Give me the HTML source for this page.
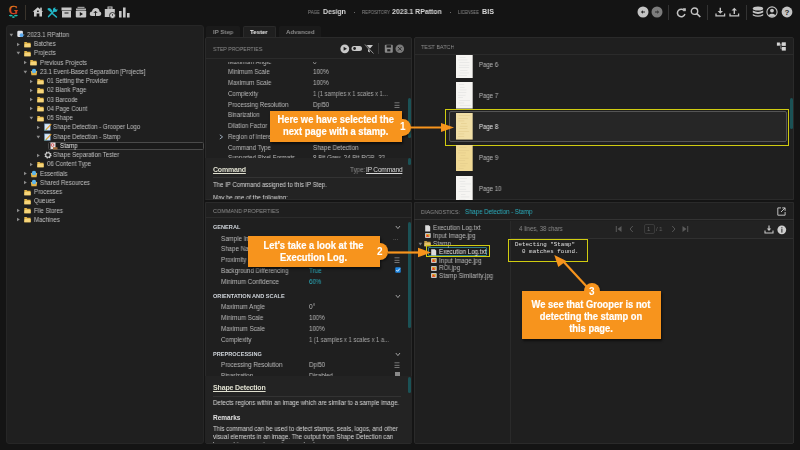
<!DOCTYPE html>
<html><head><meta charset="utf-8"><title>Grooper Design</title>
<style>
html,body{margin:0;padding:0;width:800px;height:450px;overflow:hidden;background:#141414;}
body{position:relative;font-family:"Liberation Sans", sans-serif;-webkit-font-smoothing:antialiased;}
.t{position:absolute;white-space:nowrap;font-family:"Liberation Sans", sans-serif;will-change:transform;transform-origin:0 50%;}
.r{position:absolute;display:block;}
.cw{color:#fff;font-weight:700;text-align:center;}
.sx{display:inline-block;transform:scaleX(0.9);transform-origin:50% 50%;-webkit-text-stroke:0.2px #fff;}
</style></head><body>
<svg class="r" style="left:7px;top:3px;" width="13" height="16" viewBox="0 0 13 16"><defs><linearGradient id="gg" x1="0" y1="0" x2="0" y2="1"><stop offset="0" stop-color="#e8921a"/><stop offset="1" stop-color="#e02a28"/></linearGradient></defs><text x="6.3" y="11" font-family="Liberation Serif" font-size="12.4" text-anchor="middle" fill="url(#gg)" stroke="url(#gg)" stroke-width="0.35">G</text><ellipse cx="3.8" cy="12.6" rx="1.9" ry="0.8" fill="#1fbfb0"/><ellipse cx="8.9" cy="12.6" rx="1.9" ry="0.8" fill="#1fbfb0"/><ellipse cx="6.35" cy="14.1" rx="1.6" ry="0.8" fill="#1fbfb0"/></svg>
<div class="r" style="left:25px;top:5px;width:1px;height:15px;background:#3a342c;"></div>
<svg class="r" style="left:32px;top:6px;" width="12" height="11" viewBox="0 0 12 11"><path d="M5.8 1.2 L11.2 5.8 L10 5.8 L10 10.6 L7.4 10.6 L7.4 7.6 L4.6 7.6 L4.6 10.6 L2 10.6 L2 5.8 L0.6 5.8 Z" fill="#cacaca"/><rect x="8.2" y="1.6" width="1.6" height="3" fill="#cacaca"/><rect x="5" y="4.6" width="1.8" height="1.3" fill="#141414"/></svg>
<svg class="r" style="left:47px;top:6.5px;" width="11" height="11" viewBox="0 0 11 11"><path d="M1.6 9.6 L7.4 3.6" stroke="#22b8c8" stroke-width="1.5" stroke-linecap="round"/><circle cx="8.2" cy="2.8" r="2.3" fill="#22b8c8"/><rect x="8.4" y="0.1" width="2" height="2.2" transform="rotate(45 9.4 1.2)" fill="#141414"/><path d="M4.8 6 L9.4 10" stroke="#22b8c8" stroke-width="1.5" stroke-linecap="round"/><path d="M0.6 1.6 Q2 0.2 3.8 1.8 L5.6 4 L4.2 5.4 L2 3.8 Q0 2.8 0.6 1.6 Z" fill="#22b8c8"/></svg>
<svg class="r" style="left:61px;top:7px;" width="11" height="11" viewBox="0 0 11 11"><rect x="0.5" y="0.5" width="10" height="3" fill="#c6c6c6"/><rect x="1" y="4" width="9" height="6.5" fill="#c6c6c6"/><rect x="3.5" y="5.5" width="4" height="1" fill="#141414"/></svg>
<svg class="r" style="left:75px;top:6px;" width="12" height="12" viewBox="0 0 12 12"><rect x="2.5" y="0.8" width="7" height="1.2" fill="#9a9a9a"/><rect x="1" y="2.5" width="10" height="1.5" fill="#b0b0b0"/><rect x="0.8" y="4.5" width="10.4" height="7" rx="1" fill="#c6c6c6"/><path d="M4.8 6 L8 8 L4.8 10 Z" fill="#141414"/></svg>
<svg class="r" style="left:89px;top:7px;" width="13" height="10" viewBox="0 0 13 10"><path d="M3 9 Q0.5 9 0.8 6.5 Q1 4.5 3 4.6 Q3.5 1 7 1 Q10.3 1 10.5 4.5 Q12.5 4.8 12.3 7 Q12 9 10 9 Z" fill="#c6c6c6"/><path d="M6.5 9 L6.5 4.5 M4.8 6 L6.5 4.2 L8.2 6" stroke="#141414" stroke-width="0.9" fill="none"/></svg>
<svg class="r" style="left:104px;top:6px;" width="12" height="13" viewBox="0 0 12 13"><rect x="4" y="1" width="4" height="2" fill="none" stroke="#c6c6c6" stroke-width="1"/><rect x="0.8" y="3" width="10" height="8" fill="#c6c6c6"/><circle cx="8.5" cy="9.5" r="3" fill="#c6c6c6" stroke="#141414" stroke-width="0.8"/><path d="M8.5 8 L8.5 9.8" stroke="#141414" stroke-width="0.7"/></svg>
<svg class="r" style="left:118px;top:7px;" width="13" height="11" viewBox="0 0 13 11"><rect x="1" y="4" width="2.6" height="6.5" fill="#c6c6c6"/><rect x="5" y="0.5" width="2.6" height="10" fill="#c6c6c6"/><rect x="9" y="6" width="2.6" height="4.5" fill="#c6c6c6"/></svg>
<div class="t" style="left:308px;top:8.70px;font-size:4.6px;line-height:8px;color:#8a8a8a;font-weight:400;transform:scaleX(0.951);">PAGE</div>
<div class="t" style="left:323px;top:7.00px;font-size:7.2px;line-height:10px;color:#d8d8d8;font-weight:700;transform:scaleX(0.951);">Design</div>
<div class="r" style="left:353.5px;top:11.5px;width:1.2px;height:1.2px;background:#888;border-radius:1px"></div>
<div class="t" style="left:362px;top:8.70px;font-size:4.6px;line-height:8px;color:#8a8a8a;font-weight:400;transform:scaleX(0.935);">REPOSITORY</div>
<div class="t" style="left:392px;top:7.00px;font-size:7.2px;line-height:10px;color:#d8d8d8;font-weight:700;transform:scaleX(0.965);">2023.1 RPatton</div>
<div class="r" style="left:450px;top:11.5px;width:1.2px;height:1.2px;background:#888;border-radius:1px"></div>
<div class="t" style="left:458px;top:8.70px;font-size:4.6px;line-height:8px;color:#8a8a8a;font-weight:400;transform:scaleX(0.919);">LICENSEE</div>
<div class="t" style="left:482px;top:7.00px;font-size:7.2px;line-height:10px;color:#d8d8d8;font-weight:700;transform:scaleX(0.980);">BIS</div>
<svg class="r" style="left:637px;top:6px;" width="12" height="12" viewBox="0 0 12 12"><circle cx="6" cy="6" r="5.5" fill="#c4c4c4"/><path d="M3.8 6 L6 4.2 L6 7.8 Z M5.5 5.4 L8 5.4 L8 6.6 L5.5 6.6 Z" fill="#2a2a2a"/></svg>
<svg class="r" style="left:651px;top:6px;" width="12" height="12" viewBox="0 0 12 12"><circle cx="6" cy="6" r="5.5" fill="#7c7c7c"/><path d="M8.2 6 L6 4.2 L6 7.8 Z M4 5.4 L6.5 5.4 L6.5 6.6 L4 6.6 Z" fill="#2a2a2a"/></svg>
<div class="r" style="left:668px;top:5px;width:1px;height:15px;background:#333;"></div>
<svg class="r" style="left:676px;top:7px;" width="11" height="11" viewBox="0 0 11 11"><path d="M8.6 4.2 A3.8 3.8 0 1 0 8.9 7" stroke="#c4c4c4" stroke-width="1.5" fill="none"/><path d="M6.6 1.2 L9.8 1.2 L9.8 4.4 Z" fill="#c4c4c4"/></svg>
<svg class="r" style="left:690px;top:7px;" width="12" height="11" viewBox="0 0 12 11"><circle cx="4.5" cy="4.2" r="3.2" stroke="#c4c4c4" stroke-width="1.4" fill="none"/><path d="M6.8 6.6 L10.3 10" stroke="#c4c4c4" stroke-width="1.6"/></svg>
<div class="r" style="left:707px;top:5px;width:1px;height:15px;background:#333;"></div>
<svg class="r" style="left:715px;top:7px;" width="11" height="10" viewBox="0 0 11 10"><path d="M5.3 0.8 L5.3 6" stroke="#c4c4c4" stroke-width="1.4"/><path d="M2.6 4 L5.3 6.8 L8 4 Z" fill="#c4c4c4"/><path d="M1 6.5 L1 8.8 L9.6 8.8 L9.6 6.5" stroke="#c4c4c4" stroke-width="1.3" fill="none"/></svg>
<svg class="r" style="left:729px;top:7px;" width="11" height="10" viewBox="0 0 11 10"><path d="M5.3 7 L5.3 2" stroke="#c4c4c4" stroke-width="1.4"/><path d="M2.6 3.6 L5.3 0.8 L8 3.6 Z" fill="#c4c4c4"/><path d="M1 6.5 L1 8.8 L9.6 8.8 L9.6 6.5" stroke="#c4c4c4" stroke-width="1.3" fill="none"/></svg>
<div class="r" style="left:746px;top:5px;width:1px;height:15px;background:#333;"></div>
<svg class="r" style="left:752px;top:6px;" width="12" height="12" viewBox="0 0 12 12"><ellipse cx="6" cy="2.6" rx="5.2" ry="2" fill="#c4c4c4"/><path d="M0.8 4.6 Q6 7.5 11.2 4.6 L11.2 6.6 Q6 9.5 0.8 6.6 Z" fill="#c4c4c4"/><path d="M0.8 8 Q6 11 11.2 8 L11.2 9.4 Q6 12.3 0.8 9.4 Z" fill="#c4c4c4"/></svg>
<svg class="r" style="left:766px;top:6px;" width="12" height="12" viewBox="0 0 12 12"><circle cx="6" cy="6" r="5.1" stroke="#c4c4c4" stroke-width="1.1" fill="none"/><circle cx="6" cy="4.6" r="1.9" fill="#c4c4c4"/><path d="M2.4 9.2 Q6 6.5 9.6 9.2 L8.5 10.3 Q6 11.3 3.5 10.3 Z" fill="#c4c4c4"/></svg>
<svg class="r" style="left:781px;top:6px;" width="12" height="12" viewBox="0 0 12 12"><circle cx="6" cy="6" r="5.4" fill="#c4c4c4"/><text x="6" y="9" font-family="Liberation Sans" font-weight="700" font-size="8" text-anchor="middle" fill="#262626">?</text></svg>
<div class="r" style="left:6px;top:25px;width:198px;height:418.8px;background:#1f1f1f;border:1px solid #262626;box-sizing:border-box;border-radius:3px"></div>
<svg class="r" style="left:9.4px;top:32.9px;" width="5" height="4" viewBox="0 0 5 4"><path d="M0.5 0.8 L4.2 0.8 L2.35 3.4 Z" fill="#8c8c8c"/></svg>
<svg class="r" style="left:17.2px;top:30.4px;" width="8" height="8" viewBox="0 0 8 8"><rect x="0.3" y="0.8" width="5.6" height="6.2" rx="1.2" fill="#dfe3ea"/><circle cx="4.6" cy="5.2" r="1.9" fill="#5aaaf0"/><path d="M6.5 4.6 L7.4 4.8" stroke="#ccc" stroke-width="0.6"/></svg>
<div class="t" style="left:27.0px;top:29.90px;font-size:6.6px;line-height:10px;color:#c0c0c0;font-weight:400;transform:scaleX(0.917);">2023.1 RPatton</div>
<svg class="r" style="left:16.0px;top:41.65px;" width="5" height="5" viewBox="0 0 5 5"><path d="M1 0.8 L3.8 2.5 L1 4.2 Z" fill="#8c8c8c"/></svg>
<svg class="r" style="left:23.799999999999997px;top:40.65px;" width="7" height="7" viewBox="0 0 7 7"><path d="M0.3 1 L2.6 1 L3.3 1.8 L6.6 1.8 L6.6 6.2 L0.3 6.2 Z" fill="#e5b84c"/><path d="M0.6 3 L6.6 3 L6.6 6.2 L0.3 6.2 Z" fill="#f6d57a"/></svg>
<div class="t" style="left:33.6px;top:39.15px;font-size:6.6px;line-height:10px;color:#c0c0c0;font-weight:400;transform:scaleX(0.913);">Batches</div>
<svg class="r" style="left:16.0px;top:51.4px;" width="5" height="4" viewBox="0 0 5 4"><path d="M0.5 0.8 L4.2 0.8 L2.35 3.4 Z" fill="#8c8c8c"/></svg>
<svg class="r" style="left:23.799999999999997px;top:49.9px;" width="7" height="7" viewBox="0 0 7 7"><path d="M0.3 1 L2.6 1 L3.3 1.8 L6.6 1.8 L6.6 6.2 L0.3 6.2 Z" fill="#e5b84c"/><path d="M0.6 3 L6.6 3 L6.6 6.2 L0.3 6.2 Z" fill="#f6d57a"/></svg>
<div class="t" style="left:33.6px;top:48.40px;font-size:6.6px;line-height:10px;color:#c0c0c0;font-weight:400;transform:scaleX(0.913);">Projects</div>
<svg class="r" style="left:22.6px;top:60.15px;" width="5" height="5" viewBox="0 0 5 5"><path d="M1 0.8 L3.8 2.5 L1 4.2 Z" fill="#8c8c8c"/></svg>
<svg class="r" style="left:30.4px;top:59.15px;" width="7" height="7" viewBox="0 0 7 7"><path d="M0.3 1 L2.6 1 L3.3 1.8 L6.6 1.8 L6.6 6.2 L0.3 6.2 Z" fill="#e5b84c"/><path d="M0.6 3 L6.6 3 L6.6 6.2 L0.3 6.2 Z" fill="#f6d57a"/></svg>
<div class="t" style="left:40.2px;top:57.65px;font-size:6.6px;line-height:10px;color:#c0c0c0;font-weight:400;transform:scaleX(0.913);">Previous Projects</div>
<svg class="r" style="left:22.6px;top:69.9px;" width="5" height="4" viewBox="0 0 5 4"><path d="M0.5 0.8 L4.2 0.8 L2.35 3.4 Z" fill="#8c8c8c"/></svg>
<svg class="r" style="left:30.4px;top:67.9px;" width="8" height="8" viewBox="0 0 8 8"><path d="M0.8 3 L7.2 3 L6.6 7.2 L1.4 7.2 Z" fill="#e2b348"/><circle cx="4" cy="3" r="2.2" fill="#5db5ea"/></svg>
<div class="t" style="left:40.2px;top:66.90px;font-size:6.6px;line-height:10px;color:#c0c0c0;font-weight:400;transform:scaleX(0.913);">23.1 Event-Based Separation [Projects]</div>
<svg class="r" style="left:29.199999999999996px;top:78.65px;" width="5" height="5" viewBox="0 0 5 5"><path d="M1 0.8 L3.8 2.5 L1 4.2 Z" fill="#8c8c8c"/></svg>
<svg class="r" style="left:37.0px;top:77.65px;" width="7" height="7" viewBox="0 0 7 7"><path d="M0.3 1 L2.6 1 L3.3 1.8 L6.6 1.8 L6.6 6.2 L0.3 6.2 Z" fill="#e5b84c"/><path d="M0.6 3 L6.6 3 L6.6 6.2 L0.3 6.2 Z" fill="#f6d57a"/></svg>
<div class="t" style="left:46.8px;top:76.15px;font-size:6.6px;line-height:10px;color:#c0c0c0;font-weight:400;transform:scaleX(0.912);">01 Setting the Provider</div>
<svg class="r" style="left:29.199999999999996px;top:87.9px;" width="5" height="5" viewBox="0 0 5 5"><path d="M1 0.8 L3.8 2.5 L1 4.2 Z" fill="#8c8c8c"/></svg>
<svg class="r" style="left:37.0px;top:86.9px;" width="7" height="7" viewBox="0 0 7 7"><path d="M0.3 1 L2.6 1 L3.3 1.8 L6.6 1.8 L6.6 6.2 L0.3 6.2 Z" fill="#e5b84c"/><path d="M0.6 3 L6.6 3 L6.6 6.2 L0.3 6.2 Z" fill="#f6d57a"/></svg>
<div class="t" style="left:46.8px;top:85.40px;font-size:6.6px;line-height:10px;color:#c0c0c0;font-weight:400;transform:scaleX(0.915);">02 Blank Page</div>
<svg class="r" style="left:29.199999999999996px;top:97.15px;" width="5" height="5" viewBox="0 0 5 5"><path d="M1 0.8 L3.8 2.5 L1 4.2 Z" fill="#8c8c8c"/></svg>
<svg class="r" style="left:37.0px;top:96.15px;" width="7" height="7" viewBox="0 0 7 7"><path d="M0.3 1 L2.6 1 L3.3 1.8 L6.6 1.8 L6.6 6.2 L0.3 6.2 Z" fill="#e5b84c"/><path d="M0.6 3 L6.6 3 L6.6 6.2 L0.3 6.2 Z" fill="#f6d57a"/></svg>
<div class="t" style="left:46.8px;top:94.65px;font-size:6.6px;line-height:10px;color:#c0c0c0;font-weight:400;transform:scaleX(0.913);">03 Barcode</div>
<svg class="r" style="left:29.199999999999996px;top:106.4px;" width="5" height="5" viewBox="0 0 5 5"><path d="M1 0.8 L3.8 2.5 L1 4.2 Z" fill="#8c8c8c"/></svg>
<svg class="r" style="left:37.0px;top:105.4px;" width="7" height="7" viewBox="0 0 7 7"><path d="M0.3 1 L2.6 1 L3.3 1.8 L6.6 1.8 L6.6 6.2 L0.3 6.2 Z" fill="#e5b84c"/><path d="M0.6 3 L6.6 3 L6.6 6.2 L0.3 6.2 Z" fill="#f6d57a"/></svg>
<div class="t" style="left:46.8px;top:103.90px;font-size:6.6px;line-height:10px;color:#c0c0c0;font-weight:400;transform:scaleX(0.915);">04 Page Count</div>
<svg class="r" style="left:29.199999999999996px;top:116.15px;" width="5" height="4" viewBox="0 0 5 4"><path d="M0.5 0.8 L4.2 0.8 L2.35 3.4 Z" fill="#8c8c8c"/></svg>
<svg class="r" style="left:37.0px;top:114.65px;" width="7" height="7" viewBox="0 0 7 7"><path d="M0.3 1 L2.6 1 L3.3 1.8 L6.6 1.8 L6.6 6.2 L0.3 6.2 Z" fill="#e5b84c"/><path d="M0.6 3 L6.6 3 L6.6 6.2 L0.3 6.2 Z" fill="#f6d57a"/></svg>
<div class="t" style="left:46.8px;top:113.15px;font-size:6.6px;line-height:10px;color:#c0c0c0;font-weight:400;transform:scaleX(0.915);">05 Shape</div>
<svg class="r" style="left:35.8px;top:124.9px;" width="5" height="5" viewBox="0 0 5 5"><path d="M1 0.8 L3.8 2.5 L1 4.2 Z" fill="#8c8c8c"/></svg>
<svg class="r" style="left:43.599999999999994px;top:123.4px;" width="8" height="8" viewBox="0 0 8 8"><rect x="0.6" y="0.9" width="5.6" height="6.4" fill="#d6e6f4" stroke="#7aa6d0" stroke-width="0.5"/><path d="M2 6.6 L7.2 1.2" stroke="#e39a2a" stroke-width="1.1"/><path d="M1.2 7.4 L2.4 6.2" stroke="#5fb04a" stroke-width="1"/></svg>
<div class="t" style="left:53.4px;top:122.40px;font-size:6.6px;line-height:10px;color:#c0c0c0;font-weight:400;transform:scaleX(0.914);">Shape Detection - Grooper Logo</div>
<svg class="r" style="left:35.8px;top:134.65px;" width="5" height="4" viewBox="0 0 5 4"><path d="M0.5 0.8 L4.2 0.8 L2.35 3.4 Z" fill="#8c8c8c"/></svg>
<svg class="r" style="left:43.599999999999994px;top:132.65px;" width="8" height="8" viewBox="0 0 8 8"><rect x="0.6" y="0.9" width="5.6" height="6.4" fill="#d6e6f4" stroke="#7aa6d0" stroke-width="0.5"/><path d="M2 6.6 L7.2 1.2" stroke="#e39a2a" stroke-width="1.1"/><path d="M1.2 7.4 L2.4 6.2" stroke="#5fb04a" stroke-width="1"/></svg>
<div class="t" style="left:53.4px;top:131.65px;font-size:6.6px;line-height:10px;color:#c0c0c0;font-weight:400;transform:scaleX(0.914);">Shape Detection - Stamp</div>
<div class="r" style="left:48px;top:141.6px;width:156px;height:8.6px;background:#1a1a1a;border:1px solid #4a4a4a;border-radius:1.5px;box-sizing:border-box"></div>
<svg class="r" style="left:50.2px;top:141.9px;" width="8" height="8" viewBox="0 0 8 8"><rect x="0.5" y="0.5" width="5" height="6.5" fill="#e8e2e2"/><circle cx="2.5" cy="3" r="1.4" fill="none" stroke="#d04040" stroke-width="0.8"/><rect x="3" y="5.2" width="4.5" height="2.3" fill="#a06a3a"/></svg>
<div class="t" style="left:60.0px;top:140.90px;font-size:6.6px;line-height:10px;color:#ededed;font-weight:400;transform:scaleX(0.915);">Stamp</div>
<svg class="r" style="left:35.8px;top:152.65px;" width="5" height="5" viewBox="0 0 5 5"><path d="M1 0.8 L3.8 2.5 L1 4.2 Z" fill="#8c8c8c"/></svg>
<svg class="r" style="left:43.599999999999994px;top:151.15px;" width="8" height="8" viewBox="0 0 8 8"><circle cx="4" cy="4" r="2.9" fill="none" stroke="#d4d4d4" stroke-width="1.4" stroke-dasharray="1.1 1.18"/><circle cx="4" cy="4" r="2.3" fill="none" stroke="#d4d4d4" stroke-width="1.1"/></svg>
<div class="t" style="left:53.4px;top:150.15px;font-size:6.6px;line-height:10px;color:#c0c0c0;font-weight:400;transform:scaleX(0.913);">Shape Separation Tester</div>
<svg class="r" style="left:29.199999999999996px;top:161.9px;" width="5" height="5" viewBox="0 0 5 5"><path d="M1 0.8 L3.8 2.5 L1 4.2 Z" fill="#8c8c8c"/></svg>
<svg class="r" style="left:37.0px;top:160.9px;" width="7" height="7" viewBox="0 0 7 7"><path d="M0.3 1 L2.6 1 L3.3 1.8 L6.6 1.8 L6.6 6.2 L0.3 6.2 Z" fill="#e5b84c"/><path d="M0.6 3 L6.6 3 L6.6 6.2 L0.3 6.2 Z" fill="#f6d57a"/></svg>
<div class="t" style="left:46.8px;top:159.40px;font-size:6.6px;line-height:10px;color:#c0c0c0;font-weight:400;transform:scaleX(0.914);">06 Content Type</div>
<svg class="r" style="left:22.6px;top:171.15px;" width="5" height="5" viewBox="0 0 5 5"><path d="M1 0.8 L3.8 2.5 L1 4.2 Z" fill="#8c8c8c"/></svg>
<svg class="r" style="left:30.4px;top:169.65px;" width="8" height="8" viewBox="0 0 8 8"><path d="M0.8 3 L7.2 3 L6.6 7.2 L1.4 7.2 Z" fill="#e2b348"/><circle cx="4" cy="3" r="2.2" fill="#5db5ea"/></svg>
<div class="t" style="left:40.2px;top:168.65px;font-size:6.6px;line-height:10px;color:#c0c0c0;font-weight:400;transform:scaleX(0.912);">Essentials</div>
<svg class="r" style="left:22.6px;top:180.4px;" width="5" height="5" viewBox="0 0 5 5"><path d="M1 0.8 L3.8 2.5 L1 4.2 Z" fill="#8c8c8c"/></svg>
<svg class="r" style="left:30.4px;top:178.9px;" width="8" height="8" viewBox="0 0 8 8"><path d="M0.8 3 L7.2 3 L6.6 7.2 L1.4 7.2 Z" fill="#e2b348"/><circle cx="4" cy="3" r="2.2" fill="#5db5ea"/></svg>
<div class="t" style="left:40.2px;top:177.90px;font-size:6.6px;line-height:10px;color:#c0c0c0;font-weight:400;transform:scaleX(0.913);">Shared Resources</div>
<svg class="r" style="left:23.799999999999997px;top:188.65px;" width="7" height="7" viewBox="0 0 7 7"><path d="M0.3 1 L2.6 1 L3.3 1.8 L6.6 1.8 L6.6 6.2 L0.3 6.2 Z" fill="#e5b84c"/><path d="M0.6 3 L6.6 3 L6.6 6.2 L0.3 6.2 Z" fill="#f6d57a"/></svg>
<div class="t" style="left:33.6px;top:187.15px;font-size:6.6px;line-height:10px;color:#c0c0c0;font-weight:400;transform:scaleX(0.912);">Processes</div>
<svg class="r" style="left:23.799999999999997px;top:197.9px;" width="7" height="7" viewBox="0 0 7 7"><path d="M0.3 1 L2.6 1 L3.3 1.8 L6.6 1.8 L6.6 6.2 L0.3 6.2 Z" fill="#e5b84c"/><path d="M0.6 3 L6.6 3 L6.6 6.2 L0.3 6.2 Z" fill="#f6d57a"/></svg>
<div class="t" style="left:33.6px;top:196.40px;font-size:6.6px;line-height:10px;color:#c0c0c0;font-weight:400;transform:scaleX(0.914);">Queues</div>
<svg class="r" style="left:16.0px;top:208.15px;" width="5" height="5" viewBox="0 0 5 5"><path d="M1 0.8 L3.8 2.5 L1 4.2 Z" fill="#8c8c8c"/></svg>
<svg class="r" style="left:23.799999999999997px;top:207.15px;" width="7" height="7" viewBox="0 0 7 7"><path d="M0.3 1 L2.6 1 L3.3 1.8 L6.6 1.8 L6.6 6.2 L0.3 6.2 Z" fill="#e5b84c"/><path d="M0.6 3 L6.6 3 L6.6 6.2 L0.3 6.2 Z" fill="#f6d57a"/></svg>
<div class="t" style="left:33.6px;top:205.65px;font-size:6.6px;line-height:10px;color:#c0c0c0;font-weight:400;transform:scaleX(0.915);">File Stores</div>
<svg class="r" style="left:16.0px;top:217.4px;" width="5" height="5" viewBox="0 0 5 5"><path d="M1 0.8 L3.8 2.5 L1 4.2 Z" fill="#8c8c8c"/></svg>
<svg class="r" style="left:23.799999999999997px;top:216.4px;" width="7" height="7" viewBox="0 0 7 7"><path d="M0.3 1 L2.6 1 L3.3 1.8 L6.6 1.8 L6.6 6.2 L0.3 6.2 Z" fill="#e5b84c"/><path d="M0.6 3 L6.6 3 L6.6 6.2 L0.3 6.2 Z" fill="#f6d57a"/></svg>
<div class="t" style="left:33.6px;top:214.90px;font-size:6.6px;line-height:10px;color:#c0c0c0;font-weight:400;transform:scaleX(0.913);">Machines</div>
<div class="r" style="left:206px;top:25.5px;width:34px;height:12px;background:#1a1a1a;border-radius:2px 2px 0 0"></div>
<div class="t" style="left:212.5px;top:26.90px;font-size:6.2px;line-height:10px;color:#8a8a8a;font-weight:700;transform:scaleX(0.974);">IP Step</div>
<div class="r" style="left:243.2px;top:25.8px;width:32.7px;height:12.5px;background:#1f1f1f;border:1px solid #2a2a2a;border-bottom:none;box-sizing:border-box;border-radius:2px 2px 0 0"></div>
<div class="t" style="left:249.5px;top:26.90px;font-size:6.2px;line-height:10px;color:#e8e8e8;font-weight:700;transform:scaleX(0.972);">Tester</div>
<div class="r" style="left:278.7px;top:25.5px;width:42.7px;height:12px;background:#1a1a1a;border-radius:2px 2px 0 0"></div>
<div class="t" style="left:285.5px;top:26.90px;font-size:6.2px;line-height:10px;color:#8a8a8a;font-weight:700;transform:scaleX(0.971);">Advanced</div>
<div class="r" style="left:205px;top:37px;width:207px;height:162.7px;background:#1f1f1f;border:1px solid #2a2a2a;box-sizing:border-box;border-radius:2px 2px 0 0"></div>
<div class="r" style="left:205px;top:58px;width:207px;height:1px;background:#2b2b2b;"></div>
<div class="t" style="left:213px;top:43.70px;font-size:6.2px;line-height:10px;color:#8e8e8e;font-weight:400;transform:scaleX(0.856);">STEP PROPERTIES</div>
<svg class="r" style="left:340px;top:44px;" width="10" height="10" viewBox="0 0 10 10"><circle cx="4.8" cy="4.8" r="4.4" fill="#c8c8c8"/><path d="M3.6 2.8 L7 4.8 L3.6 6.8 Z" fill="#222"/></svg>
<svg class="r" style="left:351px;top:45px;" width="12" height="7" viewBox="0 0 12 7"><rect x="0.5" y="1" width="10.5" height="5" rx="2.5" fill="#c8c8c8"/><circle cx="3.6" cy="3.5" r="1.4" fill="#222"/></svg>
<svg class="r" style="left:364px;top:44px;" width="10" height="10" viewBox="0 0 10 10"><path d="M0.8 1 L9 1 L5.8 4.8 L5.8 8.5 L4 7.5 L4 4.8 Z" fill="#c8c8c8"/><path d="M1 0.5 L9.5 9.5" stroke="#1f1f1f" stroke-width="1.6"/><path d="M1 0.5 L9.5 9.5" stroke="#c8c8c8" stroke-width="0.7"/></svg>
<div class="r" style="left:378px;top:43px;width:1px;height:11px;background:#3a3a3a;"></div>
<svg class="r" style="left:384px;top:44px;" width="10" height="10" viewBox="0 0 10 10"><rect x="0.8" y="0.8" width="8" height="8" rx="1" fill="#8a8a8a"/><rect x="2.5" y="1.2" width="4.6" height="2.4" fill="#1f1f1f"/><rect x="3.2" y="5.2" width="3.2" height="2.2" fill="#1f1f1f"/></svg>
<svg class="r" style="left:395px;top:44px;" width="10" height="10" viewBox="0 0 10 10"><circle cx="4.8" cy="4.8" r="4.3" fill="#7a7a7a"/><path d="M3 3 L6.6 6.6 M6.6 3 L3 6.6" stroke="#222" stroke-width="0.9"/></svg>
<div class="r" style="left:206px;top:61.5px;width:202px;height:96.5px;overflow:hidden">
<div class="t" style="left:22px;top:-4.90px;font-size:6.6px;line-height:10px;color:#bababa;font-weight:400;transform:scaleX(0.923);">Maximum Angle</div>
<div class="t" style="left:106.7px;top:-4.90px;font-size:6.6px;line-height:10px;color:#bababa;font-weight:400;transform:scaleX(0.933);">0°</div>
<div class="t" style="left:22px;top:5.85px;font-size:6.6px;line-height:10px;color:#bababa;font-weight:400;transform:scaleX(0.923);">Minimum Scale</div>
<div class="t" style="left:106.7px;top:5.85px;font-size:6.6px;line-height:10px;color:#bababa;font-weight:400;transform:scaleX(0.933);">100%</div>
<div class="t" style="left:22px;top:16.60px;font-size:6.6px;line-height:10px;color:#bababa;font-weight:400;transform:scaleX(0.923);">Maximum Scale</div>
<div class="t" style="left:106.7px;top:16.60px;font-size:6.6px;line-height:10px;color:#bababa;font-weight:400;transform:scaleX(0.933);">100%</div>
<div class="t" style="left:22px;top:27.35px;font-size:6.6px;line-height:10px;color:#bababa;font-weight:400;transform:scaleX(0.921);">Complexity</div>
<div class="t" style="left:106.7px;top:27.35px;font-size:6.6px;line-height:10px;color:#a8a8a8;font-weight:400;transform:scaleX(0.879);">1 (1 samples x 1 scales x 1...</div>
<div class="t" style="left:22px;top:38.10px;font-size:6.6px;line-height:10px;color:#bababa;font-weight:400;transform:scaleX(0.921);">Processing Resolution</div>
<div class="t" style="left:106.7px;top:38.10px;font-size:6.6px;line-height:10px;color:#bababa;font-weight:400;transform:scaleX(0.940);">Dpi50</div>
<div class="t" style="left:22px;top:48.85px;font-size:6.6px;line-height:10px;color:#bababa;font-weight:400;transform:scaleX(0.920);">Binarization</div>
<div class="t" style="left:22px;top:59.60px;font-size:6.6px;line-height:10px;color:#bababa;font-weight:400;transform:scaleX(0.922);">Dilation Factor</div>
<div class="t" style="left:22px;top:70.35px;font-size:6.6px;line-height:10px;color:#bababa;font-weight:400;transform:scaleX(0.922);">Region of Interest</div>
<div class="t" style="left:22px;top:81.10px;font-size:6.6px;line-height:10px;color:#bababa;font-weight:400;transform:scaleX(0.923);">Command Type</div>
<div class="t" style="left:106.7px;top:81.10px;font-size:6.6px;line-height:10px;color:#bababa;font-weight:400;transform:scaleX(0.936);">Shape Detection</div>
<div class="t" style="left:22px;top:91.85px;font-size:6.6px;line-height:10px;color:#bababa;font-weight:400;transform:scaleX(0.922);">Supported Pixel Formats</div>
<div class="t" style="left:106.7px;top:91.85px;font-size:6.6px;line-height:10px;color:#bababa;font-weight:400;transform:scaleX(0.942);">8 Bit Grey, 24 Bit RGB, 32</div>
</div>
<svg class="r" style="left:219px;top:133.5px;" width="5" height="6" viewBox="0 0 5 6"><path d="M0.8 0.8 L3.6 2.9 L0.8 5" stroke="#a8b8c8" stroke-width="0.9" fill="none"/></svg>
<svg class="r" style="left:393.5px;top:101.5px;" width="6" height="6" viewBox="0 0 6 6"><rect x="0.5" y="0.5" width="5" height="0.7" fill="#9a9a9a"/><rect x="0.5" y="2.9" width="5" height="0.7" fill="#9a9a9a"/><rect x="0.5" y="5.3" width="5" height="0.7" fill="#9a9a9a"/></svg>
<div class="r" style="left:408px;top:97.5px;width:3px;height:40px;background:#1b5256;border-radius:1.5px"></div>
<div class="r" style="left:205px;top:158px;width:207px;height:41px;background:#232323;"></div>
<div class="t" style="left:213px;top:164.5px;font-size:7px;line-height:10px;color:#e0e0d0;font-weight:700;letter-spacing:-0.2px;text-decoration:underline;">Command</div>
<div class="t" style="left:350px;top:164.70px;font-size:6.6px;line-height:10px;color:#8e8e8e;font-weight:400;transform:scaleX(0.944);">Type:</div>
<div class="t" style="left:366px;top:164.7px;font-size:6.6px;line-height:10px;color:#d8d8d8;letter-spacing:-0.2px;text-decoration:underline;">IP Command</div>
<div class="r" style="left:213px;top:177px;width:188px;height:1px;background:#333;"></div>
<div class="t" style="left:213px;top:180.00px;font-size:6.6px;line-height:10px;color:#d8d8d8;font-weight:400;transform:scaleX(0.915);">The IP Command assigned to this IP Step.</div>
<div class="r" style="left:205px;top:192px;width:203px;height:7px;overflow:hidden">
<div class="t" style="left:8px;top:1.00px;font-size:6.6px;line-height:10px;color:#d8d8d8;font-weight:400;transform:scaleX(0.910);">May be one of the following:</div>
</div>
<div class="r" style="left:408px;top:158.4px;width:3px;height:6.2px;background:#1b5256;border-radius:1.5px"></div>
<div class="r" style="left:205px;top:201.7px;width:207px;height:242px;background:#1f1f1f;border:1px solid #2a2a2a;box-sizing:border-box;border-radius:0 0 2px 2px"></div>
<div class="r" style="left:205px;top:217px;width:207px;height:1px;background:#2b2b2b;"></div>
<div class="t" style="left:213px;top:205.90px;font-size:6.2px;line-height:10px;color:#8e8e8e;font-weight:400;transform:scaleX(0.892);">COMMAND PROPERTIES</div>
<div class="r" style="left:205px;top:218.5px;width:203px;height:157.5px;overflow:hidden">
<div class="t" style="left:8px;top:3.50px;font-size:5.6px;line-height:10px;color:#cfd4da;font-weight:700;transform:scaleX(1.000);">GENERAL</div>
<div class="t" style="left:16px;top:15.00px;font-size:6.6px;line-height:10px;color:#bababa;font-weight:400;transform:scaleX(0.937);">Sample Image</div>
<div class="t" style="left:16px;top:25.70px;font-size:6.6px;line-height:10px;color:#bababa;font-weight:400;transform:scaleX(0.938);">Shape Name</div>
<div class="t" style="left:16px;top:36.60px;font-size:6.6px;line-height:10px;color:#bababa;font-weight:400;transform:scaleX(0.936);">Proximity</div>
<div class="t" style="left:16px;top:47.40px;font-size:6.6px;line-height:10px;color:#bababa;font-weight:400;transform:scaleX(0.935);">Background Differencing</div>
<div class="t" style="left:16px;top:58.30px;font-size:6.6px;line-height:10px;color:#bababa;font-weight:400;transform:scaleX(0.936);">Minimum Confidence</div>
<div class="t" style="left:8px;top:72.50px;font-size:5.6px;line-height:10px;color:#cfd4da;font-weight:700;transform:scaleX(1.000);">ORIENTATION AND SCALE</div>
<div class="t" style="left:16px;top:83.50px;font-size:6.6px;line-height:10px;color:#bababa;font-weight:400;transform:scaleX(0.937);">Maximum Angle</div>
<div class="t" style="left:16px;top:94.50px;font-size:6.6px;line-height:10px;color:#bababa;font-weight:400;transform:scaleX(0.937);">Minimum Scale</div>
<div class="t" style="left:16px;top:105.50px;font-size:6.6px;line-height:10px;color:#bababa;font-weight:400;transform:scaleX(0.937);">Maximum Scale</div>
<div class="t" style="left:16px;top:116.30px;font-size:6.6px;line-height:10px;color:#bababa;font-weight:400;transform:scaleX(0.936);">Complexity</div>
<div class="t" style="left:8px;top:130.50px;font-size:5.6px;line-height:10px;color:#cfd4da;font-weight:700;transform:scaleX(1.000);">PREPROCESSING</div>
<div class="t" style="left:16px;top:141.60px;font-size:6.6px;line-height:10px;color:#bababa;font-weight:400;transform:scaleX(0.936);">Processing Resolution</div>
<div class="t" style="left:16px;top:152.40px;font-size:6.6px;line-height:10px;color:#bababa;font-weight:400;transform:scaleX(0.935);">Binarization</div>
<div class="t" style="left:104px;top:83.50px;font-size:6.6px;line-height:10px;color:#bababa;font-weight:400;transform:scaleX(0.933);">0°</div>
<div class="t" style="left:104px;top:94.50px;font-size:6.6px;line-height:10px;color:#bababa;font-weight:400;transform:scaleX(0.933);">100%</div>
<div class="t" style="left:104px;top:105.50px;font-size:6.6px;line-height:10px;color:#bababa;font-weight:400;transform:scaleX(0.933);">100%</div>
<div class="t" style="left:104px;top:116.30px;font-size:6.6px;line-height:10px;color:#a8a8a8;font-weight:400;transform:scaleX(0.885);">1 (1 samples x 1 scales x 1 a...</div>
<div class="t" style="left:104px;top:141.60px;font-size:6.6px;line-height:10px;color:#bababa;font-weight:400;transform:scaleX(0.940);">Dpi50</div>
<div class="t" style="left:104px;top:152.40px;font-size:6.6px;line-height:10px;color:#bababa;font-weight:400;transform:scaleX(0.936);">Disabled</div>
<div class="t" style="left:104px;top:47.40px;font-size:6.6px;line-height:10px;color:#2bb0c0;font-weight:400;transform:scaleX(0.939);">True</div>
<div class="t" style="left:104px;top:58.30px;font-size:6.6px;line-height:10px;color:#2bb0c0;font-weight:400;transform:scaleX(0.933);">60%</div>
<div class="t" style="left:104px;top:15.00px;font-size:6.6px;line-height:10px;color:#bababa;font-weight:400;transform:scaleX(0.933);">(none)</div>
</div>
<svg class="r" style="left:395px;top:224.5px;" width="6" height="5" viewBox="0 0 6 5"><path d="M0.8 1 L2.9 3.6 L5 1" stroke="#a0a0a0" stroke-width="1" fill="none"/></svg>
<svg class="r" style="left:395px;top:293.5px;" width="6" height="5" viewBox="0 0 6 5"><path d="M0.8 1 L2.9 3.6 L5 1" stroke="#a0a0a0" stroke-width="1" fill="none"/></svg>
<svg class="r" style="left:395px;top:351.5px;" width="6" height="5" viewBox="0 0 6 5"><path d="M0.8 1 L2.9 3.6 L5 1" stroke="#a0a0a0" stroke-width="1" fill="none"/></svg>
<div class="t" style="left:393.3px;top:233.00px;font-size:6px;line-height:10px;color:#a8a8a8;font-weight:400;transform:scaleX(1.033);">...</div>
<svg class="r" style="left:393.5px;top:256.5px;" width="6" height="6" viewBox="0 0 6 6"><rect x="0.5" y="0.5" width="5" height="0.7" fill="#9a9a9a"/><rect x="0.5" y="2.9" width="5" height="0.7" fill="#9a9a9a"/><rect x="0.5" y="5.3" width="5" height="0.7" fill="#9a9a9a"/></svg>
<svg class="r" style="left:393.5px;top:361.5px;" width="6" height="6" viewBox="0 0 6 6"><rect x="0.5" y="0.5" width="5" height="0.7" fill="#9a9a9a"/><rect x="0.5" y="2.9" width="5" height="0.7" fill="#9a9a9a"/><rect x="0.5" y="5.3" width="5" height="0.7" fill="#9a9a9a"/></svg>
<svg class="r" style="left:394.5px;top:266.5px;" width="6" height="6" viewBox="0 0 6 6"><rect x="0.3" y="0.3" width="5.4" height="5.4" rx="0.8" fill="#1e88e5"/><path d="M1.3 3 L2.6 4.3 L4.8 1.6" stroke="#fff" stroke-width="0.9" fill="none"/></svg>
<div class="r" style="left:395px;top:371.5px;width:5px;height:4.5px;background:#8a8a8a;"></div>
<div class="r" style="left:408px;top:221.5px;width:3px;height:106.5px;background:#1b5256;border-radius:1.5px"></div>
<div class="r" style="left:205px;top:376px;width:207px;height:67px;background:#232323;border-radius:0 0 2px 2px"></div>
<div class="t" style="left:213px;top:383px;font-size:7px;line-height:10px;color:#e0e0d0;font-weight:700;letter-spacing:-0.15px;text-decoration:underline;">Shape Detection</div>
<div class="r" style="left:213px;top:396px;width:188px;height:1px;background:#333;"></div>
<div class="t" style="left:213px;top:398.40px;font-size:6.6px;line-height:10px;color:#d8d8d8;font-weight:400;transform:scaleX(0.922);">Detects regions within an image which are similar to a sample image.</div>
<div class="t" style="left:213px;top:412.60px;font-size:6.5px;line-height:10px;color:#e0e0e0;font-weight:700;transform:scaleX(0.986);">Remarks</div>
<div class="t" style="left:213px;top:423.90px;font-size:6.6px;line-height:10px;color:#d8d8d8;font-weight:400;transform:scaleX(0.919);">This command can be used to detect stamps, seals, logos, and other</div>
<div class="r" style="left:205px;top:432px;width:203px;height:10.5px;overflow:hidden">
<div class="t" style="left:8px;top:-0.30px;font-size:6.6px;line-height:10px;color:#d8d8d8;font-weight:400;transform:scaleX(0.926);">visual elements in an image. The output from Shape Detection can</div>
<div class="t" style="left:8px;top:7.60px;font-size:6.6px;line-height:10px;color:#d8d8d8;font-weight:400;transform:scaleX(0.939);">be used to generate overlays and values</div>
</div>
<div class="r" style="left:408px;top:377px;width:3px;height:16px;background:#1b5256;border-radius:1.5px"></div>
<div class="r" style="left:414px;top:37px;width:380px;height:162.7px;background:#1f1f1f;border:1px solid #2a2a2a;box-sizing:border-box;border-radius:2px 2px 0 0"></div>
<div class="r" style="left:414px;top:54px;width:380px;height:1px;background:#2b2b2b;"></div>
<div class="t" style="left:421px;top:41.90px;font-size:6.2px;line-height:10px;color:#8e8e8e;font-weight:400;transform:scaleX(0.880);">TEST BATCH</div>
<svg class="r" style="left:776px;top:41px;" width="11" height="11" viewBox="0 0 11 11"><rect x="0.9" y="1.5" width="3" height="3.2" fill="#d4d4d4"/><rect x="5.8" y="1.3" width="4" height="3.6" fill="#d4d4d4"/><rect x="5.8" y="6" width="4" height="3.6" fill="#d4d4d4"/><path d="M3.9 3.1 H5.8 M4.8 3.1 V7.8 H5.8" stroke="#c8c8c8" stroke-width="0.6" fill="none"/></svg>
<div class="r" style="left:449px;top:111.3px;width:338px;height:31.2px;background:#262626;border:1px solid #555;border-radius:2px;box-sizing:border-box"></div>
<div class="r" style="left:444.5px;top:108.8px;width:344px;height:37.2px;background:transparent;border:1.5px solid #d0cc10;box-sizing:border-box"></div>
<div class="r" style="left:414px;top:55px;width:375px;height:144.5px;overflow:hidden">
<svg class="r" style="left:42px;top:-3.4px" width="16.7" height="26.6" viewBox="0 0 16.7 26.6"><rect width="16.7" height="26.6" fill="#f6f5f2"/><rect x="4.4" y="2.5" width="10.6" height="0.5" fill="#dcdcdc"/><rect x="3.5" y="5.1" width="6.1" height="0.5" fill="#dcdcdc"/><rect x="2.0" y="7.7" width="9.3" height="0.5" fill="#dcdcdc"/><rect x="3.4" y="10.3" width="10.1" height="0.5" fill="#dcdcdc"/><rect x="3.1" y="12.9" width="10.2" height="0.5" fill="#dcdcdc"/><rect x="2.8" y="15.5" width="10.4" height="0.5" fill="#dcdcdc"/><rect x="4.2" y="18.1" width="7.3" height="0.5" fill="#dcdcdc"/><rect x="3.6" y="20.7" width="9.5" height="0.5" fill="#dcdcdc"/><rect x="2.6" y="23.3" width="8.4" height="0.5" fill="#dcdcdc"/></svg>
<div class="t" style="left:65px;top:4.90px;font-size:6.5px;line-height:10px;color:#bcbcbc;font-weight:400;transform:scaleX(0.929);">Page 6</div>
<svg class="r" style="left:42px;top:27.3px" width="16.7" height="26.6" viewBox="0 0 16.7 26.6"><rect width="16.7" height="26.6" fill="#f6f5f2"/><rect x="3.0" y="2.5" width="5.2" height="0.5" fill="#dcdcdc"/><rect x="4.0" y="5.1" width="4.6" height="0.5" fill="#dcdcdc"/><rect x="3.6" y="7.7" width="6.9" height="0.5" fill="#dcdcdc"/><rect x="2.2" y="10.3" width="8.1" height="0.5" fill="#dcdcdc"/><rect x="2.1" y="12.9" width="7.5" height="0.5" fill="#dcdcdc"/><rect x="2.2" y="15.5" width="4.7" height="0.5" fill="#dcdcdc"/><rect x="3.3" y="18.1" width="10.6" height="0.5" fill="#dcdcdc"/><rect x="2.4" y="20.7" width="5.8" height="0.5" fill="#dcdcdc"/><rect x="3.9" y="23.3" width="11.1" height="0.5" fill="#dcdcdc"/></svg>
<div class="t" style="left:65px;top:35.60px;font-size:6.5px;line-height:10px;color:#bcbcbc;font-weight:400;transform:scaleX(0.929);">Page 7</div>
<svg class="r" style="left:42px;top:58.3px" width="16.7" height="26.6" viewBox="0 0 16.7 26.6"><rect width="16.7" height="26.6" fill="#f1dfa6"/><rect x="2.7" y="2.5" width="11.7" height="0.5" fill="#e0c888"/><rect x="2.4" y="5.1" width="9.6" height="0.5" fill="#e0c888"/><rect x="2.3" y="7.7" width="6.0" height="0.5" fill="#e0c888"/><rect x="5.0" y="10.3" width="5.7" height="0.5" fill="#e0c888"/><rect x="3.9" y="12.9" width="7.7" height="0.5" fill="#e0c888"/><rect x="3.4" y="15.5" width="8.0" height="0.5" fill="#e0c888"/><rect x="2.6" y="18.1" width="10.6" height="0.5" fill="#e0c888"/><rect x="2.3" y="20.7" width="5.9" height="0.5" fill="#e0c888"/><rect x="2.1" y="23.3" width="6.1" height="0.5" fill="#e0c888"/></svg>
<div class="t" style="left:65px;top:66.60px;font-size:6.5px;line-height:10px;color:#e8e8e8;font-weight:400;transform:scaleX(0.929);">Page 8</div>
<svg class="r" style="left:42px;top:89.7px" width="16.7" height="26.6" viewBox="0 0 16.7 26.6"><rect width="16.7" height="26.6" fill="#f0d995"/><rect x="3.4" y="2.5" width="7.0" height="0.5" fill="#e0c888"/><rect x="2.4" y="5.1" width="10.9" height="0.5" fill="#e0c888"/><rect x="2.0" y="7.7" width="8.0" height="0.5" fill="#e0c888"/><rect x="4.7" y="10.3" width="4.6" height="0.5" fill="#e0c888"/><rect x="3.7" y="12.9" width="8.9" height="0.5" fill="#e0c888"/><rect x="2.1" y="15.5" width="7.0" height="0.5" fill="#e0c888"/><rect x="4.1" y="18.1" width="7.6" height="0.5" fill="#e0c888"/><rect x="4.2" y="20.7" width="5.3" height="0.5" fill="#e0c888"/><rect x="2.7" y="23.3" width="4.9" height="0.5" fill="#e0c888"/></svg>
<div class="t" style="left:65px;top:98.00px;font-size:6.5px;line-height:10px;color:#bcbcbc;font-weight:400;transform:scaleX(0.929);">Page 9</div>
<svg class="r" style="left:42px;top:121.0px" width="16.7" height="26.6" viewBox="0 0 16.7 26.6"><rect width="16.7" height="26.6" fill="#f6f5f2"/><rect x="3.7" y="2.5" width="7.4" height="0.5" fill="#dcdcdc"/><rect x="3.7" y="5.1" width="5.6" height="0.5" fill="#dcdcdc"/><rect x="4.4" y="7.7" width="10.6" height="0.5" fill="#dcdcdc"/><rect x="4.0" y="10.3" width="5.3" height="0.5" fill="#dcdcdc"/><rect x="3.6" y="12.9" width="6.6" height="0.5" fill="#dcdcdc"/><rect x="2.7" y="15.5" width="11.6" height="0.5" fill="#dcdcdc"/><rect x="5.0" y="18.1" width="4.4" height="0.5" fill="#dcdcdc"/><rect x="4.6" y="20.7" width="8.8" height="0.5" fill="#dcdcdc"/><rect x="3.1" y="23.3" width="6.3" height="0.5" fill="#dcdcdc"/></svg>
<div class="t" style="left:65px;top:129.30px;font-size:6.5px;line-height:10px;color:#bcbcbc;font-weight:400;transform:scaleX(0.929);">Page 10</div>
</div>
<div class="r" style="left:789.5px;top:97.5px;width:3.5px;height:31px;background:#1b5256;border-radius:1.5px"></div>
<div class="r" style="left:414px;top:201.7px;width:380px;height:242px;background:#1f1f1f;border:1px solid #2a2a2a;box-sizing:border-box;border-radius:0 0 2px 2px"></div>
<div class="r" style="left:414px;top:219px;width:380px;height:1.3px;background:#333;"></div>
<div class="t" style="left:421px;top:206.90px;font-size:6.2px;line-height:10px;color:#8e8e8e;font-weight:400;transform:scaleX(0.880);">DIAGNOSTICS:</div>
<div class="t" style="left:465.2px;top:206.70px;font-size:6.6px;line-height:10px;color:#2bb0c0;font-weight:400;transform:scaleX(0.914);">Shape Detection - Stamp</div>
<svg class="r" style="left:777px;top:206.5px;" width="9" height="9" viewBox="0 0 9 9"><path d="M4 0.9 H0.8 V8.2 H8.1 V5" stroke="#d0d0d0" stroke-width="0.9" fill="none"/><path d="M5.2 0.9 H8.1 V3.8 M8.1 0.9 L4 5" stroke="#d0d0d0" stroke-width="0.9" fill="none"/></svg>
<div class="r" style="left:509.5px;top:220.5px;width:1.2px;height:222.5px;background:#2a2a2a;"></div>
<div class="r" style="left:792.5px;top:220px;width:1px;height:223px;background:#2c2c2c;"></div>
<div class="r" style="left:510.5px;top:220.5px;width:282px;height:17.5px;background:#222222;"></div>
<div class="r" style="left:510.5px;top:237.5px;width:282px;height:1px;background:#303030;"></div>
<div class="t" style="left:519px;top:224.30px;font-size:6.5px;line-height:10px;color:#8a8a8a;font-weight:400;transform:scaleX(0.923);">4 lines, 38 chars</div>
<svg class="r" style="left:615px;top:225px;" width="8" height="8" viewBox="0 0 8 8"><rect x="0.8" y="1" width="1" height="6" fill="#5a5a5a"/><path d="M6.5 1 L2.5 4 L6.5 7 Z" fill="#5a5a5a"/></svg>
<svg class="r" style="left:629px;top:225px;" width="5" height="8" viewBox="0 0 5 8"><path d="M3.8 1 L1 4 L3.8 7" stroke="#5a5a5a" stroke-width="0.9" fill="none"/></svg>
<div class="r" style="left:643.5px;top:223.8px;width:11px;height:10px;background:transparent;border:1px solid #3a3a3a;border-radius:2px;box-sizing:border-box"></div>
<div class="t" style="left:647.3px;top:224.00px;font-size:6px;line-height:10px;color:#666;font-weight:400;transform:scaleX(1.000);">1</div>
<div class="t" style="left:656px;top:224.00px;font-size:6px;line-height:10px;color:#666;font-weight:400;transform:scaleX(0.933);">/ 1</div>
<svg class="r" style="left:671px;top:225px;" width="5" height="8" viewBox="0 0 5 8"><path d="M1.2 1 L4 4 L1.2 7" stroke="#5a5a5a" stroke-width="0.9" fill="none"/></svg>
<svg class="r" style="left:681px;top:225px;" width="8" height="8" viewBox="0 0 8 8"><rect x="6.2" y="1" width="1" height="6" fill="#5a5a5a"/><path d="M1.5 1 L5.5 4 L1.5 7 Z" fill="#5a5a5a"/></svg>
<svg class="r" style="left:764px;top:225px;" width="10" height="9" viewBox="0 0 10 9"><path d="M5 0.5 V5" stroke="#c8c8c8" stroke-width="1.2"/><path d="M2.8 3.5 L5 6 L7.2 3.5 Z" fill="#c8c8c8"/><path d="M1 5.5 V8 H9 V5.5" stroke="#c8c8c8" stroke-width="1.1" fill="none"/></svg>
<svg class="r" style="left:776.5px;top:224.5px;" width="10" height="10" viewBox="0 0 10 10"><circle cx="4.8" cy="4.8" r="4.4" fill="#cfcfcf"/><rect x="4.2" y="4" width="1.3" height="3.6" fill="#4a4a4a"/><rect x="4.2" y="2.2" width="1.3" height="1.2" fill="#4a4a4a"/></svg>
<div class="r" style="left:428px;top:247.2px;width:59.2px;height:8.6px;background:#1b1b1b;border:1px solid #2f7f86;border-radius:1px;box-sizing:border-box"></div>
<svg class="r" style="left:424.9px;top:224.7px;" width="6" height="7" viewBox="0 0 6 7"><path d="M0.2 0.2 H3.8 L5.2 1.6 V6.6 H0.2 Z" fill="#dcdcdc"/></svg>
<div class="t" style="left:433.0px;top:223.10px;font-size:6.6px;line-height:10px;color:#bababa;font-weight:400;transform:scaleX(0.936);">Execution Log.txt</div>
<svg class="r" style="left:424.8px;top:233.3px;" width="6" height="5" viewBox="0 0 6 5"><rect x="0.2" y="0.2" width="5.4" height="4.6" fill="#ececec"/><rect x="1" y="1" width="3.8" height="2.8" fill="#f0a030"/><path d="M1 3.8 L2.4 1.6 L4.4 3.8 Z" fill="#d83a2a"/><circle cx="4" cy="1.8" r="0.6" fill="#7bc043"/></svg>
<div class="t" style="left:433.0px;top:230.90px;font-size:6.6px;line-height:10px;color:#bababa;font-weight:400;transform:scaleX(0.937);">Input Image.jpg</div>
<svg class="r" style="left:418px;top:241.9px;" width="5" height="4" viewBox="0 0 5 4"><path d="M0.5 0.8 L4.2 0.8 L2.35 3.4 Z" fill="#7a7a7a"/></svg>
<svg class="r" style="left:424.0px;top:240.4px;" width="7" height="7" viewBox="0 0 7 7"><path d="M0.3 1 L2.6 1 L3.3 1.8 L6.6 1.8 L6.6 6.2 L0.3 6.2 Z" fill="#c9a24a"/><path d="M0.6 3 L6.6 3 L6.6 6.2 L0.3 6.2 Z" fill="#e2c06a"/></svg>
<div class="t" style="left:433.0px;top:238.90px;font-size:6.6px;line-height:10px;color:#bababa;font-weight:400;transform:scaleX(0.938);">Stamp</div>
<svg class="r" style="left:431.2px;top:248.5px;" width="6" height="7" viewBox="0 0 6 7"><path d="M0.2 0.2 H3.8 L5.2 1.6 V6.6 H0.2 Z" fill="#dcdcdc"/></svg>
<div class="t" style="left:439.3px;top:246.90px;font-size:6.6px;line-height:10px;color:#e6e6e6;font-weight:400;transform:scaleX(0.936);">Execution Log.txt</div>
<svg class="r" style="left:431.1px;top:257.9px;" width="6" height="5" viewBox="0 0 6 5"><rect x="0.2" y="0.2" width="5.4" height="4.6" fill="#ececec"/><rect x="1" y="1" width="3.8" height="2.8" fill="#f0a030"/><path d="M1 3.8 L2.4 1.6 L4.4 3.8 Z" fill="#d83a2a"/><circle cx="4" cy="1.8" r="0.6" fill="#7bc043"/></svg>
<div class="t" style="left:439.3px;top:255.50px;font-size:6.6px;line-height:10px;color:#bababa;font-weight:400;transform:scaleX(0.937);">Input Image.jpg</div>
<svg class="r" style="left:431.1px;top:265.59999999999997px;" width="6" height="5" viewBox="0 0 6 5"><rect x="0.2" y="0.2" width="5.4" height="4.6" fill="#ececec"/><rect x="1" y="1" width="3.8" height="2.8" fill="#f0a030"/><path d="M1 3.8 L2.4 1.6 L4.4 3.8 Z" fill="#d83a2a"/><circle cx="4" cy="1.8" r="0.6" fill="#7bc043"/></svg>
<div class="t" style="left:439.3px;top:263.20px;font-size:6.6px;line-height:10px;color:#bababa;font-weight:400;transform:scaleX(0.943);">ROI.jpg</div>
<svg class="r" style="left:431.1px;top:273.4px;" width="6" height="5" viewBox="0 0 6 5"><rect x="0.2" y="0.2" width="5.4" height="4.6" fill="#ececec"/><rect x="1" y="1" width="3.8" height="2.8" fill="#f0a030"/><path d="M1 3.8 L2.4 1.6 L4.4 3.8 Z" fill="#d83a2a"/><circle cx="4" cy="1.8" r="0.6" fill="#7bc043"/></svg>
<div class="t" style="left:439.3px;top:271.00px;font-size:6.6px;line-height:10px;color:#bababa;font-weight:400;transform:scaleX(0.936);">Stamp Similarity.jpg</div>
<div class="r" style="left:425.5px;top:244.8px;width:64.5px;height:12px;background:transparent;border:1.3px solid #d0cc10;box-sizing:border-box"></div>
<div class="t" style="left:515px;top:242.2px;font-family:'Liberation Mono',monospace;font-size:5.8px;line-height:6.5px;color:#e2e2e2;letter-spacing:0.05px;white-space:pre">Detecting "Stamp"
  0 matches found.</div>
<div class="r" style="left:508.2px;top:239.2px;width:80.3px;height:22.6px;background:transparent;border:1.3px solid #d0cc10;box-sizing:border-box"></div>
<div class="r" style="left:270px;top:111px;width:132px;height:31px;background:#f7941d;box-shadow:1px 1.5px 2px rgba(0,0,0,0.55)"></div>
<div class="r" style="left:394px;top:119px;width:16.5px;height:16.5px;border-radius:50%;background:#f7941d;box-shadow:1px 1.5px 2px rgba(0,0,0,0.4)"></div>
<div class="r" style="left:270px;top:111px;width:132px;height:31px;background:#f7941d;"></div>
<div class="t cw" style="left:270px;top:114.1px;width:132px;font-size:10.4px;line-height:11.5px;"><span class="sx">Here we have selected the<br>next page with a stamp.</span></div>
<div class="t" style="left:399.5px;top:121.30px;font-size:10px;line-height:12px;color:#fff;font-weight:700;transform:scaleX(1.000);">1</div>
<svg class="r" style="left:408px;top:121px;" width="50" height="13" viewBox="0 0 50 13"><path d="M2 6.5 H36" stroke="#f7941d" stroke-width="2.2"/><path d="M33 2 L46 6.5 L33 11 Z" fill="#f7941d"/></svg>
<div class="r" style="left:248px;top:236px;width:131.5px;height:31px;background:#f7941d;box-shadow:1px 1.5px 2px rgba(0,0,0,0.55)"></div>
<div class="r" style="left:371.8px;top:243.3px;width:16.5px;height:16.5px;border-radius:50%;background:#f7941d;box-shadow:1px 1.5px 2px rgba(0,0,0,0.4)"></div>
<div class="r" style="left:248px;top:236px;width:131.5px;height:31px;background:#f7941d;"></div>
<div class="t cw" style="left:248px;top:240.3px;width:131.5px;font-size:10.4px;line-height:11.6px;"><span class="sx">Let’s take a look at the<br>Execution Log.</span></div>
<div class="t" style="left:377.3px;top:245.60px;font-size:10px;line-height:12px;color:#fff;font-weight:700;transform:scaleX(1.000);">2</div>
<svg class="r" style="left:386px;top:245.5px;" width="48" height="13" viewBox="0 0 48 13"><path d="M2 6.5 H34" stroke="#f7941d" stroke-width="2.2"/><path d="M32 1.8 L45 6.5 L32 11.2 Z" fill="#f7941d"/></svg>
<svg class="r" style="left:550px;top:250px;" width="45" height="45" viewBox="0 0 45 45"><path d="M38 38 L12 10" stroke="#f7941d" stroke-width="2.2"/><path d="M4.3 5 L16.3 11 L8.3 17 Z" fill="#f7941d"/></svg>
<div class="r" style="left:522px;top:291px;width:139px;height:48px;background:#f7941d;box-shadow:1px 1.5px 2px rgba(0,0,0,0.55)"></div>
<div class="r" style="left:583.5px;top:283px;width:16.5px;height:16.5px;border-radius:50%;background:#f7941d;box-shadow:1px 1.5px 2px rgba(0,0,0,0.4)"></div>
<div class="r" style="left:522px;top:291px;width:139px;height:48px;background:#f7941d;"></div>
<div class="t" style="left:588.5px;top:285.50px;font-size:10px;line-height:12px;color:#fff;font-weight:700;transform:scaleX(1.000);">3</div>
<div class="t cw" style="left:522px;top:298.6px;width:139px;font-size:10.4px;line-height:11.75px;"><span class="sx">We see that Grooper is not<br>detecting the stamp on<br>this page.</span></div>
</body></html>
